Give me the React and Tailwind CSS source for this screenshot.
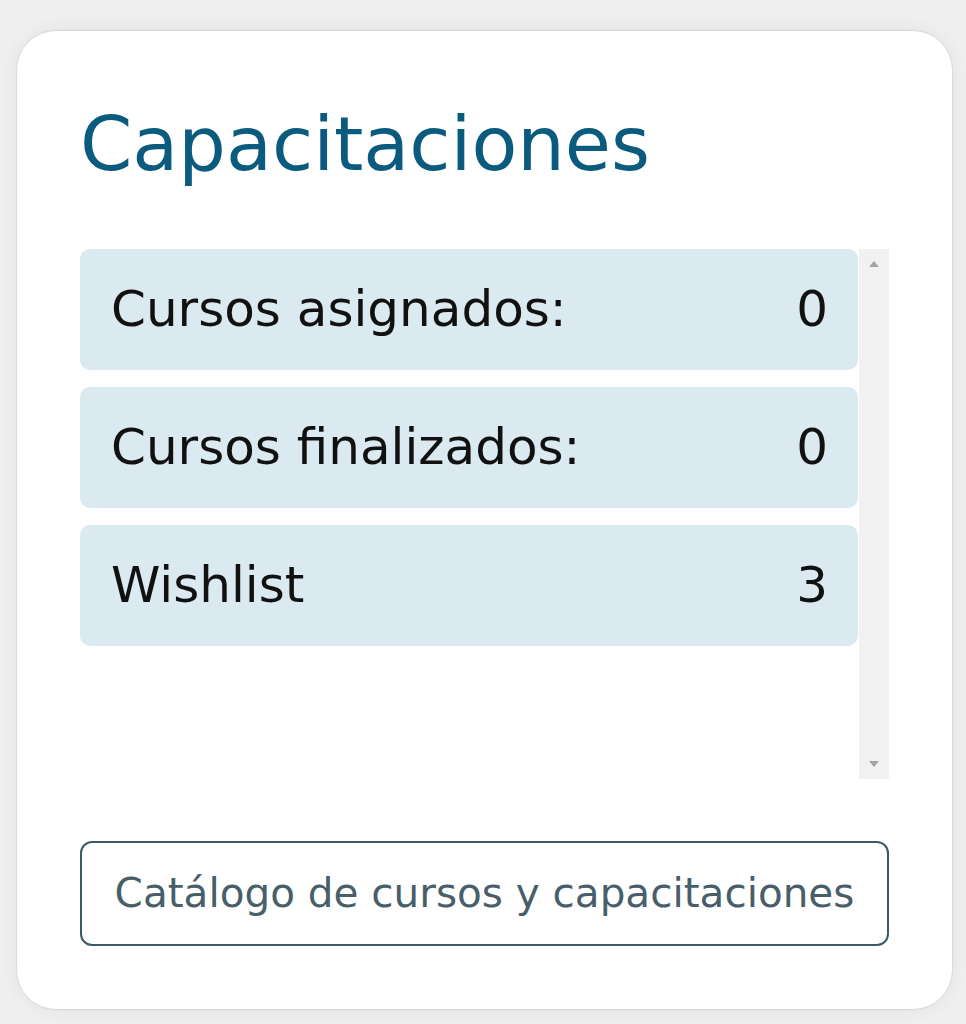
export default function App() {
  const rows = [
    { label: "Cursos asignados:", value: 0 },
    { label: "Cursos finalizados:", value: 0 },
    { label: "Wishlist", value: 3 },
  ];

  return (
    <div
      className="min-h-screen bg-[#efefef] pt-[30px] px-[16px] pb-[14px]"
      style={{ fontFamily: '"DejaVu Sans", "Noto Sans", sans-serif' }}
    >
      <div className="w-[937px] h-[980px] bg-white border border-[#dcd8d8] rounded-[40px] shadow-[0_0_18px_rgba(0,0,0,0.06)] px-[63px] pt-[76px] pb-[63px] flex flex-col">
        {/* HEADER */}
        <h1 className="text-[75px] leading-none text-[#0b5b7f] mb-[67px]">
          Capacitaciones
        </h1>

        {/* LIST */}
        <div className="flex h-[530px] gap-[1px]">
          <div className="flex-1 flex flex-col gap-[17px]">
            {rows.map(r => (
              <div
                key={r.label}
                className="h-[121px] rounded-[10px] bg-[#dbeaf1] flex items-center justify-between pl-[31px] pr-[30px] text-[50px] text-[#111111]"
              >
                <span>{r.label}</span>
                <span>{r.value}</span>
              </div>
            ))}
          </div>
          <div className="w-[30px] bg-[#f1f1f1] flex flex-col items-center justify-between py-[12px]">
            <div className="w-0 h-0 border-l-[5px] border-r-[5px] border-b-[6px] border-l-transparent border-r-transparent border-b-[#a3a3a3]" />
            <div className="w-0 h-0 border-l-[5px] border-r-[5px] border-t-[6px] border-l-transparent border-r-transparent border-t-[#a3a3a3]" />
          </div>
        </div>

        {/* BUTTON */}
        <button className="mt-auto h-[105px] w-full border-2 border-[#3b5b68] rounded-[12px] text-[40.5px] text-[#485f6a] bg-white">
          Catálogo de cursos y capacitaciones
        </button>
      </div>
    </div>
  );
}
